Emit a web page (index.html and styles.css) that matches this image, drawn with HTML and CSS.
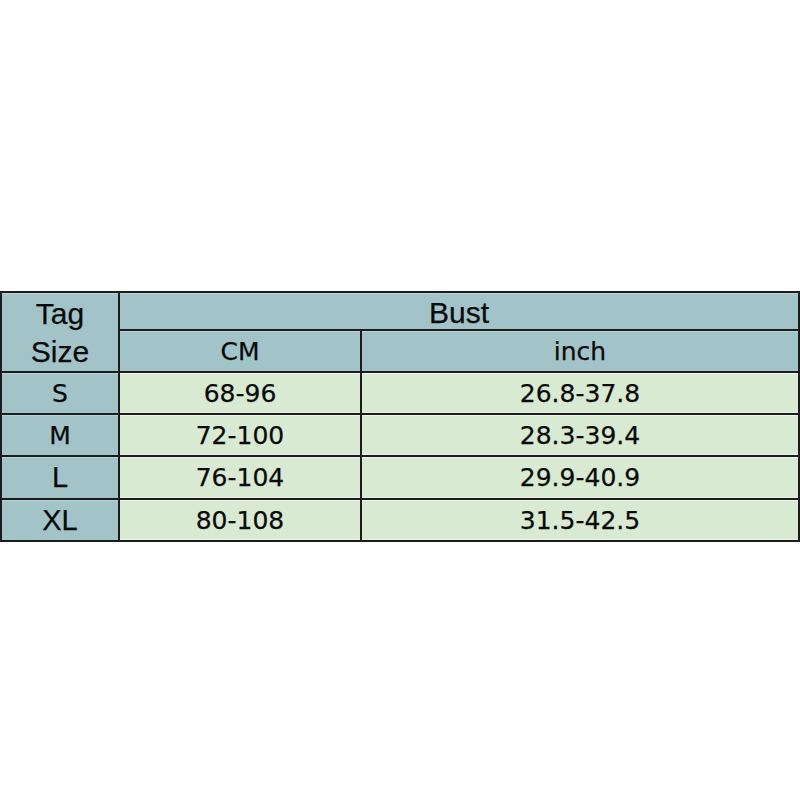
FILE: index.html
```html
<!DOCTYPE html>
<html>
<head>
<meta charset="utf-8">
<link rel="stylesheet" href="styles.css">
</head>
<body>
<div class="page">
  <div class="chart">
    <div class="cell head tag">Tag<br>Size</div>
    <div class="cell head bust">Bust</div>
    <div class="cell head comic">CM</div>
    <div class="cell head comic">inch</div>

    <div class="cell size comic">S</div>
    <div class="cell data">68-96</div>
    <div class="cell data">26.8-37.8</div>

    <div class="cell size comic">M</div>
    <div class="cell data">72-100</div>
    <div class="cell data">28.3-39.4</div>

    <div class="cell size arial">L</div>
    <div class="cell data">76-104</div>
    <div class="cell data">29.9-40.9</div>

    <div class="cell size arial">XL</div>
    <div class="cell data">80-108</div>
    <div class="cell data">31.5-42.5</div>
  </div>
</div>
</body>
</html>
```

FILE: styles.css
```css
html, body {
  margin: 0;
  padding: 0;
  background: #ffffff;
}

.page {
  width: 800px;
  height: 800px;
  padding-top: 291px;
  box-sizing: border-box;
}

.chart {
  display: grid;
  width: 800px;
  box-sizing: border-box;
  grid-template-columns: 116px 240px 436px;
  grid-template-rows: 36px 40px 40px 40px 41px 40px;
  gap: 2px;
  padding: 2px;
  background: #1c1c1c;
  color: #0a0a0a;
}

.cell {
  display: flex;
  align-items: center;
  justify-content: center;
  text-align: center;
  font-family: "DejaVu Sans", sans-serif;
  font-size: 25px;
  -webkit-text-stroke: 0.25px #0a0a0a;
}

.head {
  background: #a2c4c9;
  box-shadow: inset 0 1px 0 rgba(255, 255, 255, 0.25);
}

.size {
  background: #a2c4c9;
  box-shadow: inset 0 1px 0 rgba(255, 255, 255, 0.25);
}

.data {
  background: #d9ead3;
  box-shadow: inset 0 1px 0 rgba(255, 255, 255, 0.6), inset 0 -1px 0 rgba(255, 255, 255, 0.4);
}

.tag {
  grid-row: span 2;
  font-family: "Liberation Sans", Arial, sans-serif;
  font-size: 30px;
  line-height: 38px;
  padding-top: 2px;
}

.bust {
  grid-column: span 2;
  font-family: "Liberation Sans", Arial, sans-serif;
  font-size: 30px;
  padding-top: 3px;
}

.comic {
  font-family: "DejaVu Sans", sans-serif;
  font-size: 25px;
}

.arial {
  font-family: "Liberation Sans", Arial, sans-serif;
  font-size: 29px;
}
```
